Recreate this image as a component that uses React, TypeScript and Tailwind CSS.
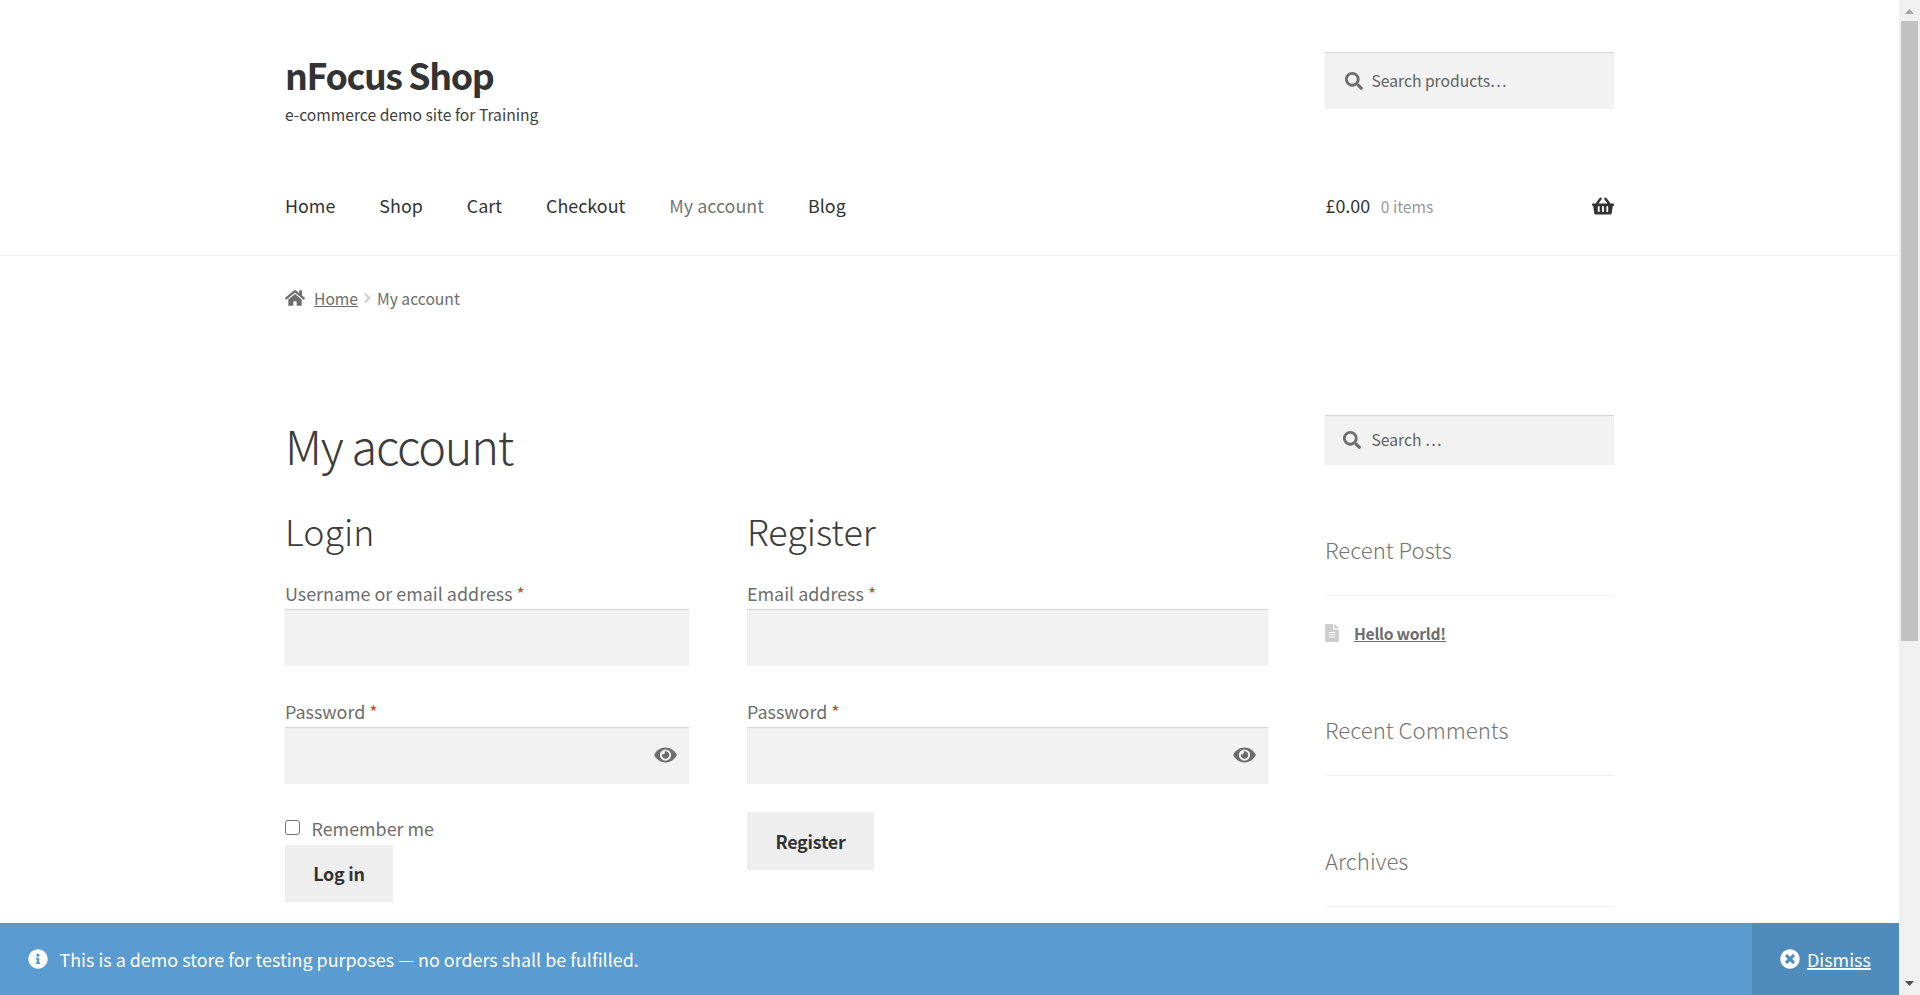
import React from "react";
import { FaSearch, FaHome, FaShoppingBasket, FaEye, FaFileAlt, FaInfoCircle, FaTimesCircle, FaAngleRight } from "react-icons/fa";

const fields =
  "w-full bg-[#f2f2f2] shadow-[inset_0_1px_1px_rgba(0,0,0,0.125)] border-0 outline-none";

function Label({ children }: { children: React.ReactNode }) {
  return (
    <label className="block h-[32px] whitespace-nowrap text-[17.9px] leading-[32px] text-[#6d6d6d]">
      {children} <span className="text-[#e2401c]">*</span>
    </label>
  );
}

function PasswordField() {
  return (
    <div className="relative h-[57px]">
      <input type="password" className={`${fields} block h-[57px]`} />
      <FaEye className="absolute right-[12px] top-[18px] h-[20px] w-[23px] text-[#6d6d6d]" />
    </div>
  );
}

function WidgetTitle({ children }: { children: React.ReactNode }) {
  return (
    <h3 className="h-[63px] border-b border-[#f0f0f0] text-[22.2px] font-light leading-[32px] text-[#757575]">
      {children}
    </h3>
  );
}

export default function App() {
  return (
    <div className="flex h-[995px] w-[1920px] overflow-hidden bg-white font-['Noto_Sans_CJK_SC',sans-serif] text-[#6d6d6d]">
      <div className="flex h-full w-[1899px] shrink-0 flex-col">
        <header className="h-[256px] shrink-0 border-b border-[#f0f0f0] pl-[285px] pr-[285px]">
          <div className="flex h-[181px] justify-between pt-[52px]">
            <div>
              <h1 className="h-[49px] whitespace-nowrap text-[35.8px] font-bold leading-[45px] tracking-[-1.4px] text-[#333]">nFocus Shop</h1>
              <p className="whitespace-nowrap text-[15.65px] leading-[28px] text-[#404040]">e-commerce demo site for Training</p>
            </div>
            <div className="flex h-[57px] w-[289px] items-center bg-[#f2f2f2] pl-[20px] shadow-[inset_0_1px_1px_rgba(0,0,0,0.125)]">
              <FaSearch className="h-[18px] w-[18px] text-[#6d6d6d]" />
              <span className="ml-[8.5px] text-[15.65px] leading-[28px] text-[#616161]">Search products…</span>
            </div>
          </div>
          <div className="flex items-start justify-between text-[17.9px] leading-[49px]">
            <nav className="flex gap-[44px] whitespace-nowrap text-[#333]">
              <a>Home</a>
              <a>Shop</a>
              <a>Cart</a>
              <a>Checkout</a>
              <a className="text-[#747474]">My account</a>
              <a>Blog</a>
            </nav>
            <div className="flex h-[49px] w-[289px] items-center text-[#333]">
              <span className="ml-[0.5px]">£0.00</span>
              <span className="ml-[10.5px] pt-[2px] text-[15.65px] text-[#999]">0 items</span>
              <FaShoppingBasket className="ml-auto h-[20px] w-[22px]" />
            </div>
          </div>
        </header>

        <nav className="mt-[26px] flex h-[32px] shrink-0 items-center pl-[285px] text-[15.65px] leading-[33px]">
          <FaHome className="h-[20px] w-[20px]" />
          <a className="ml-[9px] underline">Home</a>
          <FaAngleRight className="ml-[4px] h-[16px] w-[11px] text-[#d3d3d3]" />
          <span className="ml-[4px]">My account</span>
        </nav>

        <main className="flex grow pl-[285px] pt-[101px]">
          <div className="w-[983px]">
            <h1 className="h-[81px] whitespace-nowrap text-[46.9px] font-light leading-[60px] tracking-[-1.25px] text-[#3c3c3c]">My account</h1>
            <div className="flex gap-[58px]">
              <section className="w-[404px]">
                <h2 className="h-[81px] text-[35.8px] font-light leading-[68px] text-[#3c3c3c]">Login</h2>
                <Label>Username or email address</Label>
                <input className={`${fields} block h-[57px]`} />
                <div className="h-[29px]" />
                <Label>Password</Label>
                <PasswordField />
                <div className="mt-[28px] flex h-[33px] items-center">
                  <span className="mb-[2px] h-[15px] w-[15px] rounded-[3px] border border-[#767676] bg-white" />
                  <span className="ml-[11.5px] text-[17.9px] leading-[33px]">Remember me</span>
                </div>
                <button className="block h-[57px] w-[108px] bg-[#eee] text-[17.9px] font-bold tracking-[-0.25px] text-[#333]">Log in</button>
              </section>
              <section className="w-[521px]">
                <h2 className="h-[81px] text-[35.8px] font-light leading-[68px] text-[#3c3c3c]">Register</h2>
                <Label>Email address</Label>
                <input className={`${fields} block h-[57px]`} />
                <div className="h-[29px]" />
                <Label>Password</Label>
                <PasswordField />
                <button className="mt-[28px] block h-[58px] w-[127px] bg-[#eee] text-[17.9px] font-bold tracking-[-0.25px] text-[#333]">Register</button>
              </section>
            </div>
          </div>
          <aside className="ml-[57px] w-[289px]">
            <div className="flex h-[50px] items-center bg-[#f2f2f2] pl-[18px] shadow-[inset_0_1px_1px_rgba(0,0,0,0.125)]">
              <FaSearch className="h-[18px] w-[18px]" />
              <span className="ml-[10.5px] text-[15.65px] leading-[28px] text-[#616161]">Search …</span>
            </div>
            <div className="mt-[68px]">
              <WidgetTitle>Recent Posts</WidgetTitle>
              <div className="flex h-[72px] items-center pt-px">
                <FaFileAlt className="h-[18px] w-[14px] text-[#ccc]" />
                <a className="ml-[15px] pt-[2px] text-[15.65px] font-bold tracking-[-0.25px] underline">Hello world!</a>
              </div>
            </div>
            <div className="mt-[45px]"><WidgetTitle>Recent Comments</WidgetTitle></div>
            <div className="mt-[68px]"><WidgetTitle>Archives</WidgetTitle></div>
          </aside>
        </main>

        <footer className="flex h-[72px] shrink-0 items-center bg-[#5a9bd0] pl-[28px] text-[17.9px] leading-[72px] text-white">
          <FaInfoCircle className="h-[20px] w-[20px]" />
          <p className="ml-[11.5px] whitespace-nowrap">This is a demo store for testing purposes — no orders shall be fulfilled.</p>
          <div className="ml-auto flex h-full w-[147px] items-center bg-[#4f8bbb] pl-[28px]">
            <FaTimesCircle className="h-[20px] w-[20px]" />
            <a className="ml-[7px] underline decoration-2">Dismiss</a>
          </div>
        </footer>
      </div>
      <div className="flex w-[21px] flex-col items-center bg-[#f0f0f0]">
        <svg className="h-[21px] w-[21px]" viewBox="0 0 21 21"><path d="M6 14h9l-4.500-5z" fill="#a3a3a3" /></svg>
        <div className="h-[620px] w-[17px] bg-[#c1c1c1]" />
        <svg className="mt-auto h-[21px] w-[21px]" viewBox="0 0 21 21"><path d="M6 7h9l-4.500 5z" fill="#505050" /></svg>
      </div>
    </div>
  );
}
